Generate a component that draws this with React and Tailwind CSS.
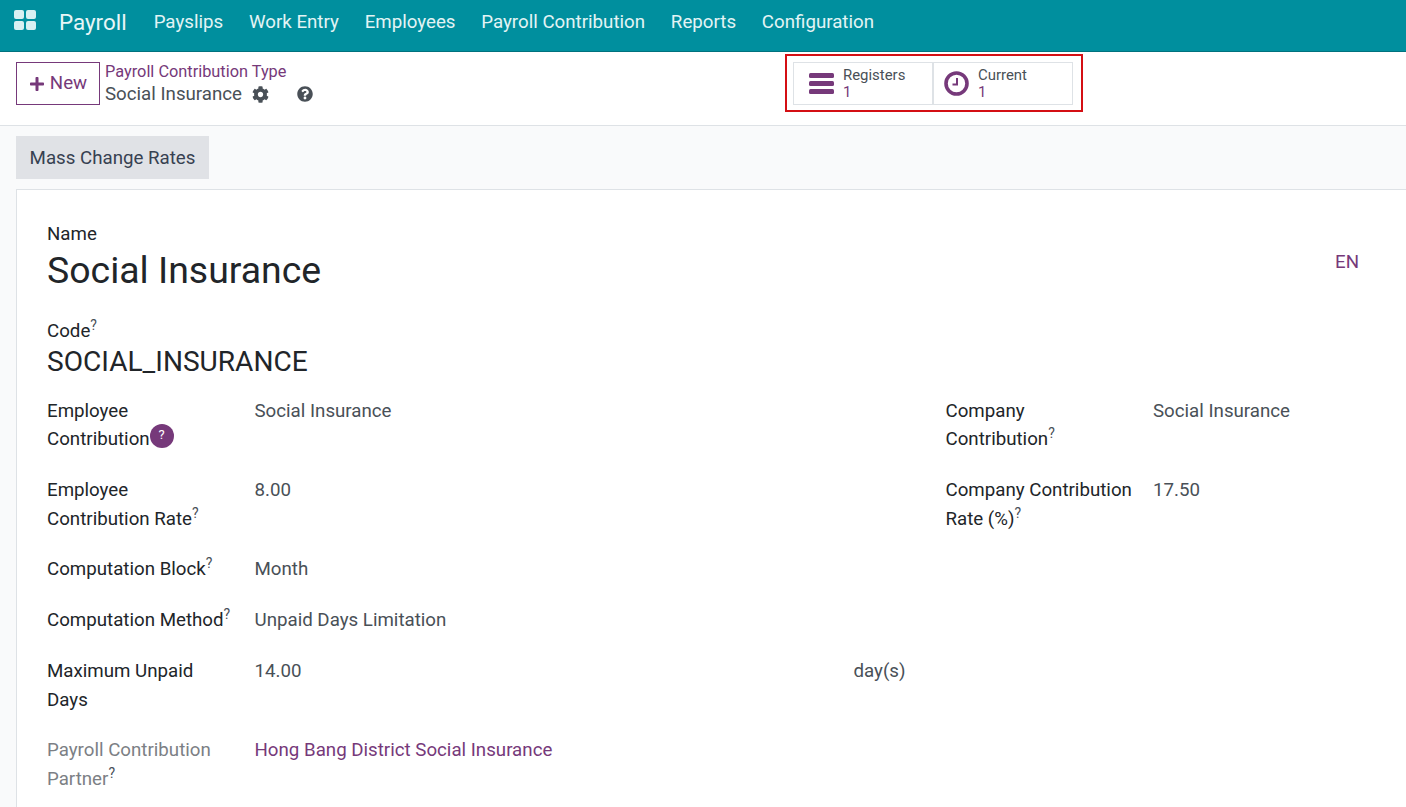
import React from "react";
import { FaCog, FaPlus, FaQuestionCircle } from "react-icons/fa";

const menu = ["Payslips", "Work Entry", "Employees", "Payroll Contribution", "Reports", "Configuration"];

function Help() {
	return <sup className="text-[14px] text-[#495057] top-[-7px]">?</sup>;
}

function Row({ label, help, muted, children }) {
	return (
		<div className="flex mb-[22.2px]">
			<div className={`w-[207.5px] shrink-0 pr-[20px] ${muted ? "text-[#7c7f85]" : "text-[#212529]"}`}>
				{label}
				{help && <Help />}
			</div>
			<div className="flex-1 text-[#495057]">{children}</div>
		</div>
	);
}

export default function App() {
	return (
		<div className="h-[807px] overflow-hidden bg-[#f9fafb] font-['Roboto',sans-serif] text-[18.72px] leading-[28.6px]">
			<nav className="h-[52px] bg-[#008f9e] border-b border-[#00727e] flex items-start text-white pt-[8px]">
				<svg className="ml-[14px] mt-[2px] w-[22px] h-[20px]" viewBox="0 0 22 20" fill="#d8f0f2">
					<rect x="0" y="0" width="10" height="9" rx="2" />
					<rect x="12" y="0" width="10" height="9" rx="2" />
					<rect x="0" y="11" width="10" height="9" rx="2" />
					<rect x="12" y="11" width="10" height="9" rx="2" />
				</svg>
				<span className="ml-[23px] mr-[27px] text-[22.4px] text-[#e8f6f7]">Payroll</span>
				<div className="flex gap-[25.8px] text-[#e3f4f5]">
					{menu.map((m) => (
						<span key={m}>{m}</span>
					))}
				</div>
			</nav>

			<header className="h-[74px] bg-white border-b border-[#dee2e6] flex relative">
				<button className="ml-4 mt-[10px] w-[84px] h-[43px] border border-[#76397a] text-[#76397a] flex items-center justify-center gap-[5px]">
					<FaPlus size={16} />
					New
				</button>
				<div className="ml-[5px] mt-[7px]">
					<div className="text-[16.33px] leading-[25px] text-[#76397a]">Payroll Contribution Type</div>
					<div className="flex items-center text-[#495057] leading-[20px]">
						Social Insurance
						<FaCog className="ml-[10px]" size={17} />
						<FaQuestionCircle className="ml-[28px]" size={16} />
					</div>
				</div>
				<div className="absolute left-[785px] top-[2px] w-[298px] h-[58px] border-2 border-[#d40f14] pl-[6px] pt-[6px]">
					<div className="flex h-[43px] w-[280px] border border-[#dee2e6] text-[14.93px] leading-[17px]">
						<div className="w-[140px] border-r-2 border-[#dee2e6] flex items-center">
							<svg className="ml-[15px]" width="25" height="21" viewBox="0 0 25 21" fill="#76397a">
								<rect x="0" y="0" width="25" height="5" rx="1.5" />
								<rect x="0" y="8" width="25" height="5" rx="1.5" />
								<rect x="0" y="16" width="25" height="5" rx="1.5" />
							</svg>
							<div className="ml-[9px]">
								<div className="text-[#495057]">Registers</div>
								<div className="text-[#76397a]">1</div>
							</div>
						</div>
						<div className="flex-1 flex items-center">
							<svg className="ml-[10px]" width="25" height="25" viewBox="0 0 25 25" fill="none" stroke="#76397a">
								<circle cx="12.5" cy="12.5" r="10.5" strokeWidth="3.6" />
								<path d="M13 7v6.5H8.5" strokeWidth="2" />
							</svg>
							<div className="ml-[9px]">
								<div className="text-[#495057]">Current</div>
								<div className="text-[#76397a]">1</div>
							</div>
						</div>
					</div>
				</div>
			</header>

			<div className="pl-4 pt-[10px]">
				<button className="h-[43px] w-[193px] pt-px bg-[#e0e2e6] text-[#374151] text-center">Mass Change Rates</button>
				<main className="mt-[10px] bg-white border border-[#dee2e6] border-r-0 pl-[30px] pr-[47px] pt-[30px] h-[640px]">
					<div className="flex justify-between">
						<div>
							<div className="text-[#212529]">Name</div>
							<h1 className="text-[37.44px] leading-[43px] text-[#212529]">Social Insurance</h1>
						</div>
						<span className="mt-[28px] text-[#76397a]">EN</span>
					</div>
					<div className="mt-[25px] text-[#212529]">
						Code
						<Help />
					</div>
					<div className="text-[28.08px] leading-[33px] text-[#212529] mb-[18.5px]">SOCIAL_INSURANCE</div>

					<div className="flex">
						<div className="w-[898.5px] shrink-0">
							<Row
								label={
									<>
										Employee Contribution
										<span className="inline-flex w-6 h-6 relative top-[-6px] -my-2 rounded-full bg-[#76397a] text-white text-[13px] items-center justify-center">?</span>
									</>
								}
							>
								Social Insurance
							</Row>
							<Row label="Employee Contribution Rate" help>
								8.00
							</Row>
							<Row label="Computation Block" help>
								Month
							</Row>
							<Row label="Computation Method" help>
								Unpaid Days Limitation
							</Row>
							<Row label="Maximum Unpaid Days">
								<div className="flex pr-[40px] justify-between">
									<span>14.00</span>
									<span>day(s)</span>
								</div>
							</Row>
							<Row label="Payroll Contribution Partner" help muted>
								<span className="text-[#76397a]">Hong Bang District Social Insurance</span>
							</Row>
						</div>
						<div className="flex-1">
							<Row label="Company Contribution" help>
								Social Insurance
							</Row>
							<Row label="Company Contribution Rate (%)" help>
								17.50
							</Row>
						</div>
					</div>
				</main>
			</div>
		</div>
	);
}
